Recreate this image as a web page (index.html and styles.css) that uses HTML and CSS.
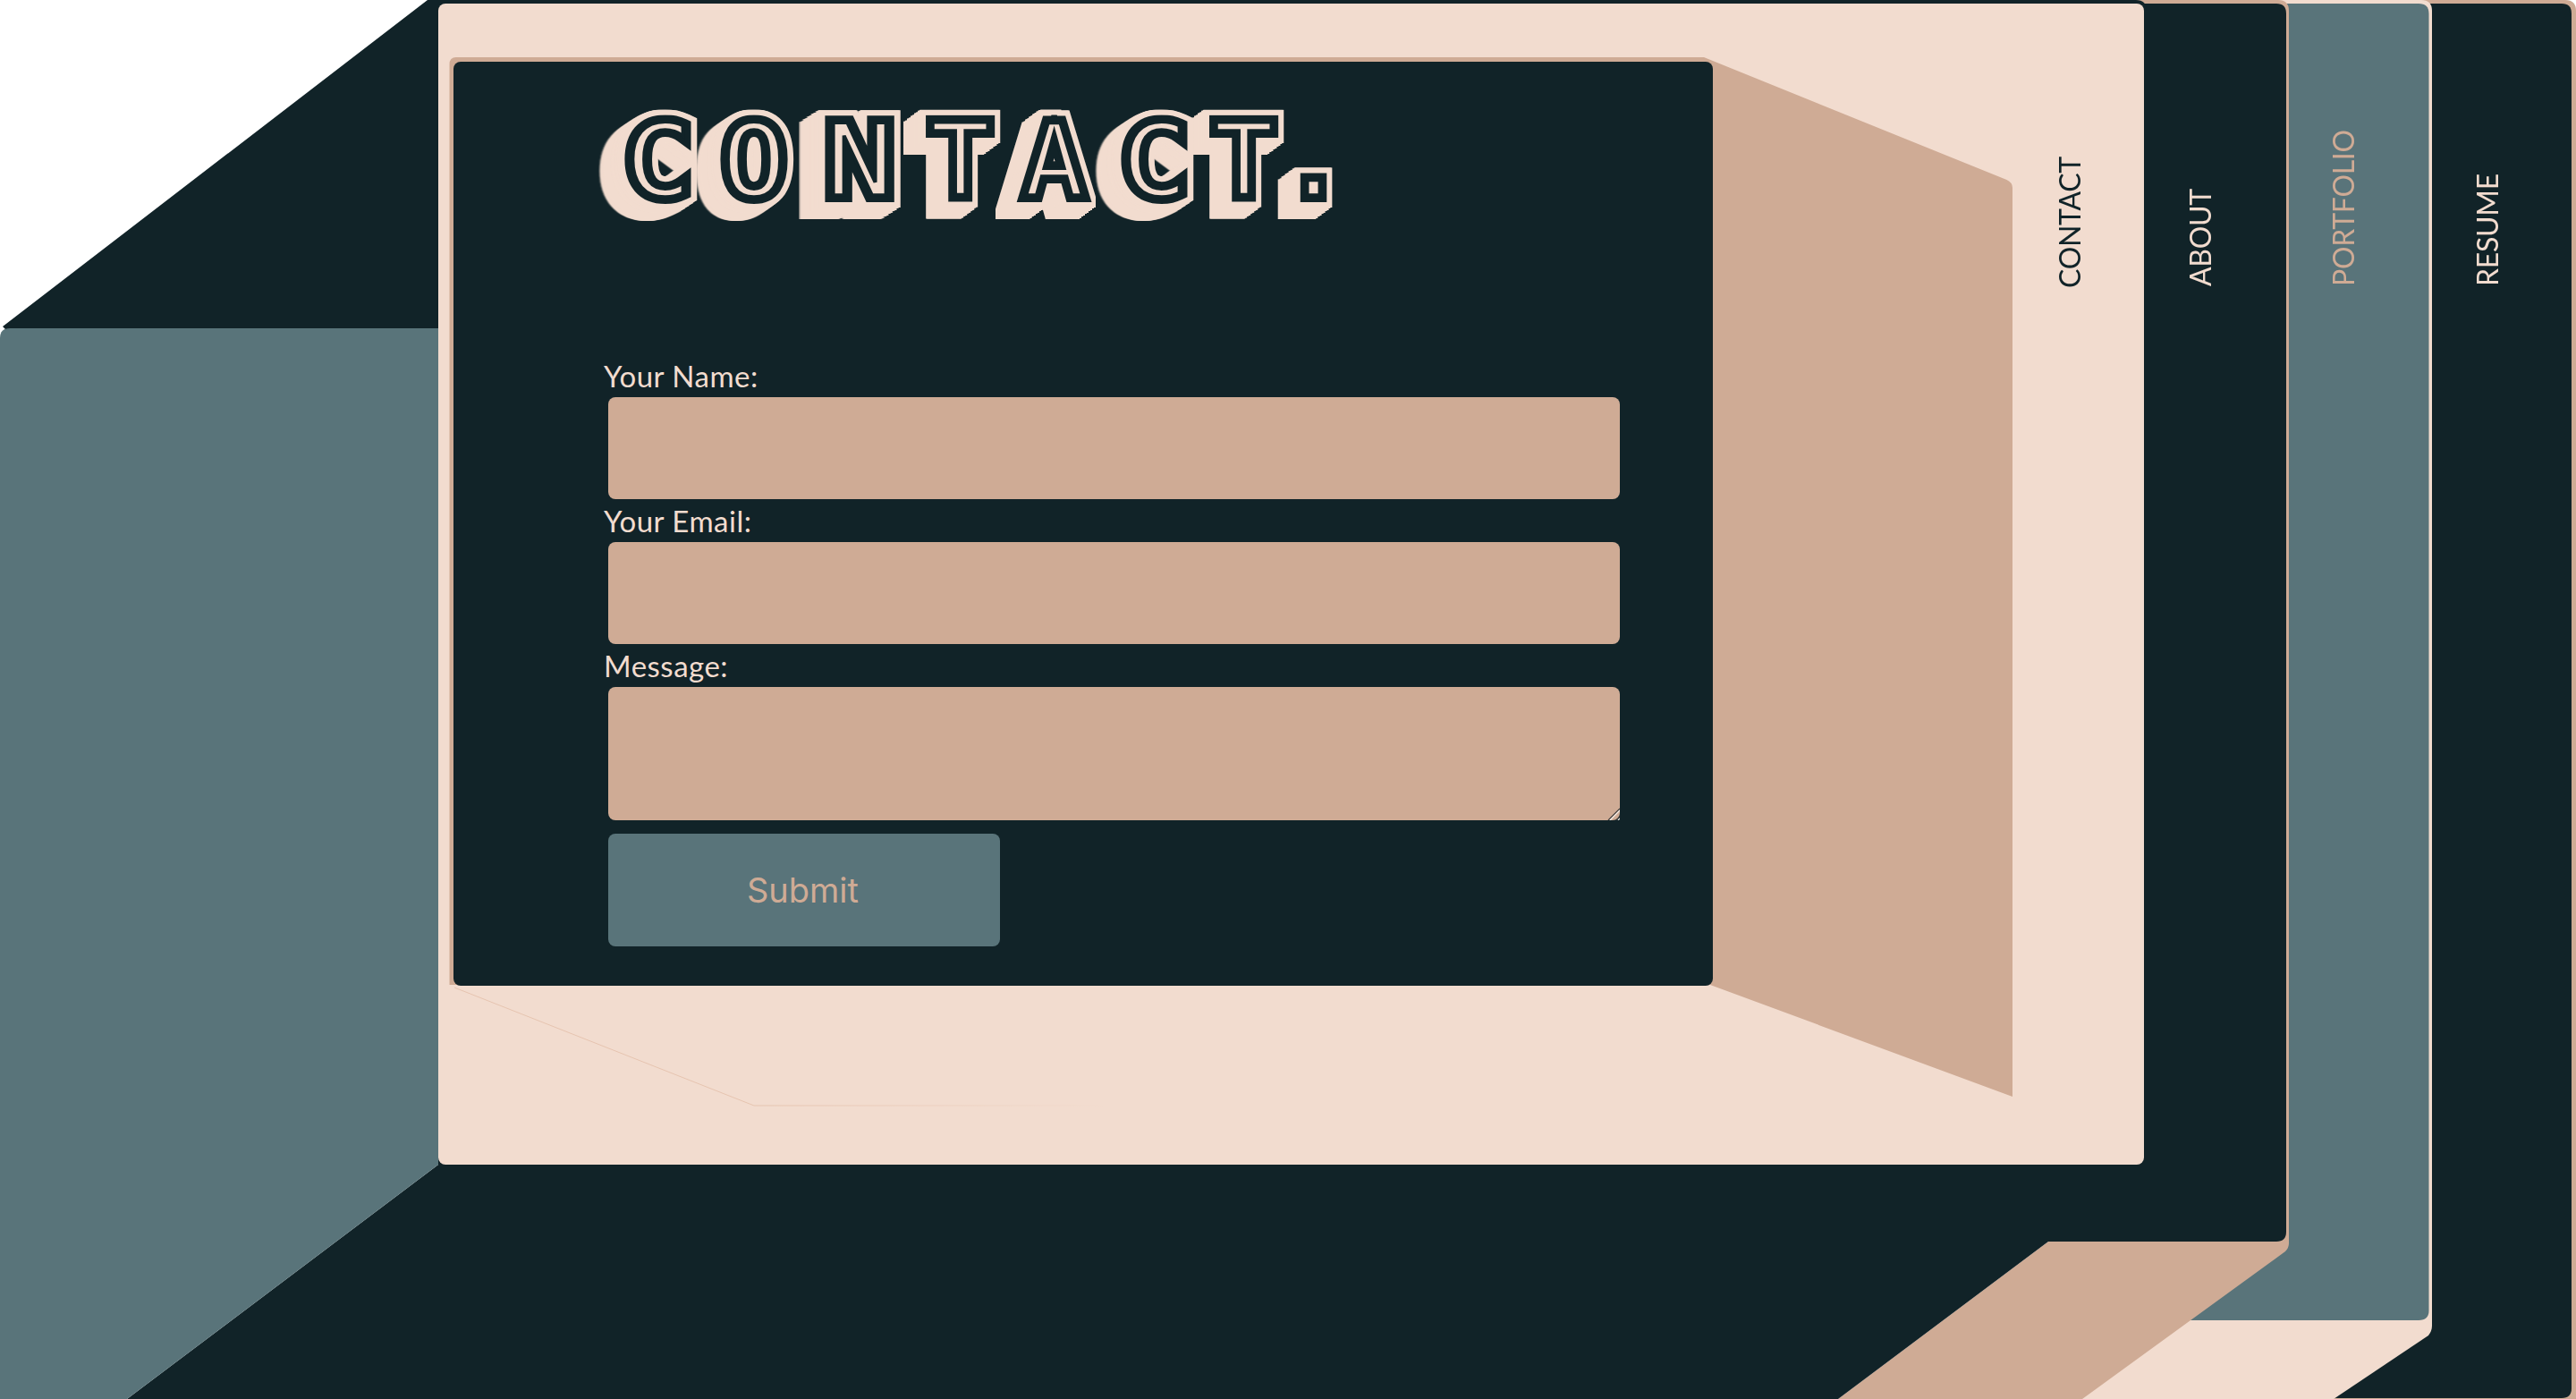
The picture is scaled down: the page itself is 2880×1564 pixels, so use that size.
FILE: index.html
```html
<!DOCTYPE html>
<html lang="en">
<head>
<meta charset="utf-8">
<title>Contact</title>
<link rel="stylesheet" href="styles.css">
</head>
<body>
<main class="stage">
  <svg class="scene" viewBox="0 0 2880 1564" width="2880" height="1564" aria-hidden="true">
    <!-- resume -->
    <path class="tan" d="M2600 0H2868Q2880 0 2880 12V1564H2600Z"/>
    <path class="dark" d="M2500 4H2864Q2875 4 2875 15V1552Q2875 1563 2864 1563H2500Z"/>
    <!-- portfolio -->
    <path class="beige" d="M2300 0H2707Q2719 0 2719 12V1482Q2719 1488 2715 1493L2609 1564H2300Z"/>
    <path class="teal" d="M2300 4H2704Q2715.5 4 2715.5 15V1465Q2715.5 1476 2704 1476H2300Z"/>
    <!-- about -->
    <path class="tan" d="M2055 1564L2290 1388H2300V0H2547Q2559 0 2559 12V1390Q2559 1395 2555 1399L2328 1564Z"/>
    <path class="dark" d="M490 4H2545Q2556 4 2556 15V1377Q2556 1388 2545 1388H2290L2055 1564H142L490 1302Z"/>
    <!-- contact faces -->
    <path class="dark" d="M478 0H2388Q2400 0 2400 12V1300H490V368H6L3 365Z"/>
    <path class="teal" d="M0 378Q0 367 11 367H490V1302L142 1564H0Z"/>
  </svg>

  <div class="deck">
    <section class="card">
      <svg class="room" viewBox="0 0 1907 1298" width="1907" height="1298" aria-hidden="true">
        <defs>
          <linearGradient id="fade" x1="0" x2="1" y1="0" y2="0">
            <stop offset="0" stop-color="#e6c4b0"/>
            <stop offset="1" stop-color="#e6c4b0" stop-opacity="0"/>
          </linearGradient>
        </defs>
        <path class="tan" d="M12.5 1090V68Q12.5 60 20 60H1415L1753.5 197Q1760 200 1760 206V1222L1422 1097H12.5Z"/>
        <path class="seam" d="M18 1100L353 1232"/>
        <rect x="353" y="1231.5" width="400" height="1" fill="url(#fade)"/>
      </svg>
      <div class="panel">
        <h1 class="title"><span class="glyph glyph-c" data-c="C">C</span><span class="glyph glyph-o" data-c="O">O</span><span class="glyph glyph-n" data-c="N">N</span><span class="glyph" data-c="T">T</span><span class="glyph" data-c="A">A</span><span class="glyph glyph-c" data-c="C">C</span><span class="glyph" data-c="T">T</span><span class="glyph" data-c=".">.</span></h1>
        <form class="form">
          <label class="label" for="name">Your Name:</label>
          <input class="field" id="name" type="text">
          <label class="label" for="email">Your Email:</label>
          <input class="field" id="email" type="email">
          <label class="label" for="message">Message:</label>
          <div class="area">
            <textarea class="field field-area" id="message"></textarea>
            <svg class="grip" viewBox="0 0 16 16" width="16" height="16" aria-hidden="true">
              <path class="grip-dark" d="M3 16L16 3M12 16L16 12"/>
              <path class="grip-light" d="M5 16L16 5M14 16L16 14"/>
            </svg>
          </div>
          <button class="submit" type="button">Submit</button>
        </form>
      </div>
      <a class="tab tab-contact">CONTACT</a>
    </section>
    <a class="tab tab-about">ABOUT</a>
    <a class="tab tab-portfolio">PORTFOLIO</a>
    <a class="tab tab-resume">RESUME</a>
  </div>
</main>
</body>
</html>
```

FILE: styles.css
```css
* { box-sizing: border-box; }
html, body { margin: 0; padding: 0; background: #fff; }
.stage { position: relative; width: 2880px; height: 1564px; overflow: hidden; font-family: "Lato", sans-serif; }
.scene { position: absolute; inset: 0; display: block; }
.dark { fill: #112328; }
.teal { fill: #59747a; }
.beige { fill: #f2dccf; }
.tan { fill: #cfab95; }
.seam { stroke: #e6c4b0; stroke-width: 1; fill: none; }

.deck { position: relative; display: flex; align-items: flex-start; padding: 4px 0 0 490px; height: 100%; }

.card { position: relative; display: flex; align-items: flex-start; flex: none; width: 1907px; height: 1298px; padding: 64.5px 0 0 17px; background: #f2dccf; border-radius: 8px; }
.room { position: absolute; inset: 0; display: block; }

.panel { position: relative; flex: none; width: 1408px; height: 1033px; padding: 0 0 0 173px; background: #112328; border-radius: 8px; }

.title { display: flex; isolation: isolate; margin: 31px 0 0 23px; padding: 0; height: 160px; font: 400 110px/160px "DejaVu Sans Mono", monospace; color: #f2dccf; -webkit-text-stroke: 3.5px #112328; white-space: nowrap; }
.glyph { position: relative; display: block; flex: none; width: 66px; text-align: center; }
.glyph::before, .glyph::after { content: attr(data-c); position: absolute; inset: 0; }
.glyph::before { z-index: -2; color: #f2dccf; -webkit-text-stroke: 28px #f2dccf; clip-path: inset(23px -60px -60px -60px); filter: drop-shadow(-1px 0.75px 0 #f2dccf) drop-shadow(-2px 1.5px 0 #f2dccf) drop-shadow(-4px 3px 0 #f2dccf) drop-shadow(-8px 6px 0 #f2dccf) drop-shadow(-4px 3px 0 #f2dccf); }
.glyph::after { z-index: -1; color: #112328; -webkit-text-stroke: 16px #112328; clip-path: inset(29px -60px -60px -60px); }
.glyph-c { transform: scaleX(1.12); }
.glyph-o { transform: scaleX(1.08); }
.glyph-n { transform: scaleX(1.15); }
.glyph:nth-child(2) { margin-left: 40.5px; }
.glyph:nth-child(3) { margin-left: 52px; }
.glyph:nth-child(4) { margin-left: 47px; }
.glyph:nth-child(5) { margin-left: 39px; }
.glyph:nth-child(6) { margin-left: 46px; }
.glyph:nth-child(7) { margin-left: 34px; }
.glyph:nth-child(8) { margin-left: 12px; }

.form { display: flex; flex-direction: column; align-items: flex-start; margin-top: 136.5px; }
.label { display: block; height: 48px; font-size: 33px; line-height: 48px; letter-spacing: 0.5px; color: #f2dccf; margin-left: -5px; }
.field { display: block; width: 1131px; height: 114px; border: 0; border-radius: 8px; background: #cfab95; outline: 0; padding: 0; }
.area { position: relative; height: 149px; }
.field-area { height: 149px; resize: none; }
.grip { position: absolute; right: 0; bottom: 0; display: block; }
.grip-dark { stroke: #3a3a3a; stroke-width: 1.2; fill: none; }
.grip-light { stroke: #f4f0ec; stroke-width: 1.2; fill: none; }
.submit { width: 438px; height: 126px; margin-top: 15px; padding: 0 3px 0 0; border: 0; border-radius: 8px; background: #59747a; color: #cfab95; font: 400 38px "Inter", sans-serif; }

.tab { display: block; flex: none; height: 316px; font-size: 32px; line-height: 40px; letter-spacing: -0.3px; writing-mode: vertical-rl; transform: rotate(180deg); white-space: nowrap; }
.tab-contact { margin: -62.5px 0 0 379px; color: #112328; }
.tab-about { margin: 0 0 0 43px; color: #f2dccf; }
.tab-portfolio { margin: 0 0 0 120px; color: #cfab95; }
.tab-resume { margin: 0 0 0 121px; color: #f2dccf; }
```
